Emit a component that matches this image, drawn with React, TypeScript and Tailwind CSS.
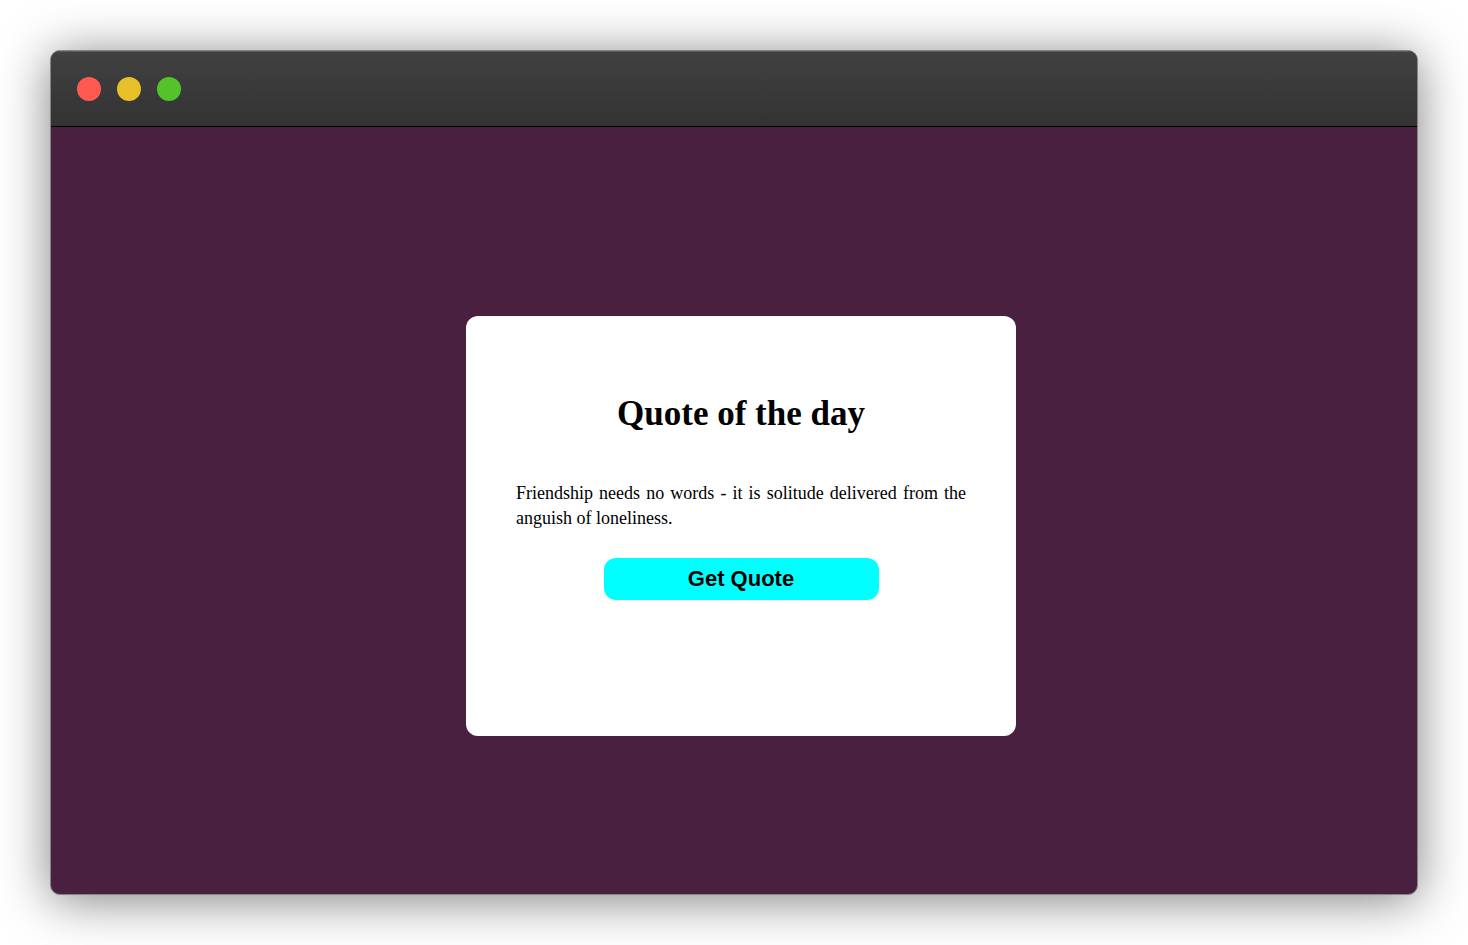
export default function App() {
  return (
    <div className="flex min-h-screen bg-white p-[50px]">
      <div className="flex min-w-0 flex-1 flex-col overflow-hidden rounded-[10px] border border-[#858585] bg-[#49203f] shadow-[0_5px_50px_rgba(0,0,0,0.5)]">
        <header className="flex h-[76px] shrink-0 items-center gap-4 border-b border-black bg-linear-to-b from-[#414141] to-[#333333] px-[26px] shadow-[inset_0_1px_0_#5c5c5c]">
          <button type="button" aria-label="Close" className="size-6 rounded-full bg-[#ff5a52]" />
          <button type="button" aria-label="Minimize" className="size-6 rounded-full bg-[#e6c029]" />
          <button type="button" aria-label="Maximize" className="size-6 rounded-full bg-[#54c22b]" />
        </header>
        <main className="flex flex-1 items-center justify-center pt-[30px] pl-[14px]">
          <section className="flex min-h-[420px] w-[550px] flex-col items-center rounded-[12px] bg-white px-[50px] pt-[73px] font-['Liberation_Serif',serif] text-black">
            <h1 className="text-[35px] leading-[50px] font-bold">Quote of the day</h1>
            <p className="mt-[42px] w-full text-justify text-[18px] leading-[25px]">
              Friendship needs no words - it is solitude delivered from the anguish of loneliness.
            </p>
            <button
              type="button"
              className="mt-[27px] h-[42px] w-[275px] rounded-[12px] bg-[#00ffff] font-['Liberation_Sans',sans-serif] text-[22px] leading-[40px] font-bold"
            >
              Get Quote
            </button>
          </section>
        </main>
      </div>
    </div>
  );
}
